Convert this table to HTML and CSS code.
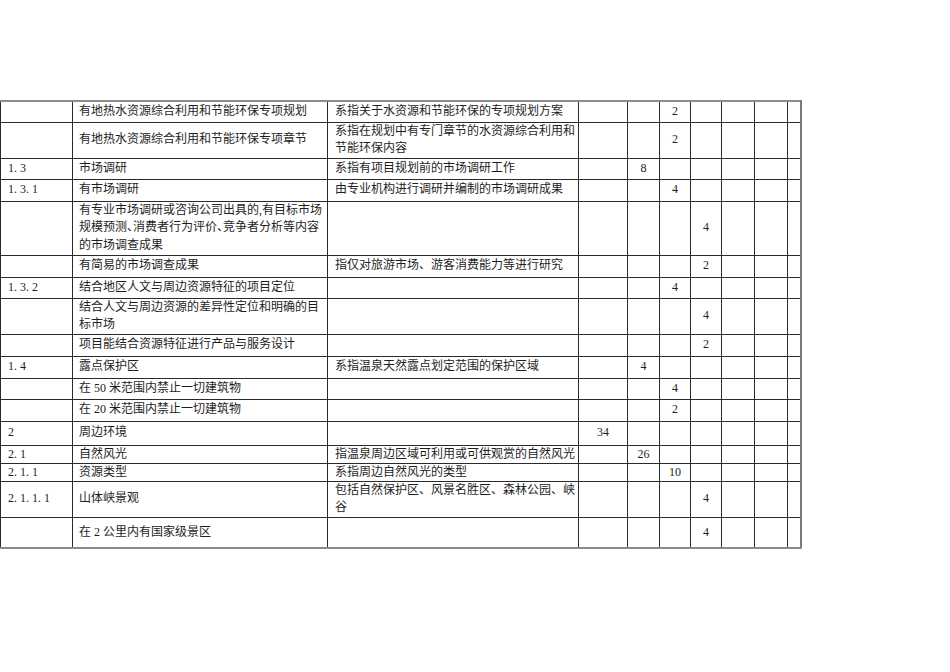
FILE: index.html
```html
<!DOCTYPE html>
<html lang="zh-CN">
<head>
<meta charset="utf-8">
<title>温泉评分表</title>
<link rel="stylesheet" href="styles.css">
</head>
<body>
<div class="page">
<table class="grid">
  <colgroup>
    <col class="c-code"><col class="c-item"><col class="c-desc">
    <col class="c-s1"><col class="c-s2"><col class="c-s3"><col class="c-s4">
    <col class="c-s5"><col class="c-s6"><col class="c-s7">
  </colgroup>
  <tbody>
    <tr class="h21"><td></td><td>有地热水资源综合利用和节能环保专项规划</td><td class="desc">系指关于水资源和节能环保的专项规划方案</td><td></td><td></td><td class="n">2</td><td></td><td></td><td></td><td></td></tr>
    <tr class="h36"><td></td><td>有地热水资源综合利用和节能环保专项章节</td><td class="desc">系指在规划中有专门章节的水资源综合利用和<br>节能环保内容</td><td></td><td></td><td class="n">2</td><td></td><td></td><td></td><td></td></tr>
    <tr class="h21"><td class="code">1. 3</td><td>市场调研</td><td class="desc">系指有项目规划前的市场调研工作</td><td></td><td class="n">8</td><td></td><td></td><td></td><td></td><td></td></tr>
    <tr class="h22"><td class="code">1. 3. 1</td><td>有市场调研</td><td class="desc">由专业机构进行调研并编制的市场调研成果</td><td></td><td></td><td class="n">4</td><td></td><td></td><td></td><td></td></tr>
    <tr class="h54"><td></td><td>有专业市场调研或咨询公司出具的,有目标市场<br>规模预测<span class="half">、</span>消费者行为评价<span class="half">、</span>竞争者分析等内容<br>的市场调查成果</td><td class="desc"></td><td></td><td></td><td></td><td class="n">4</td><td></td><td></td><td></td></tr>
    <tr class="h22"><td></td><td>有简易的市场调查成果</td><td class="desc">指仅对旅游市场、游客消费能力等进行研究</td><td></td><td></td><td></td><td class="n">2</td><td></td><td></td><td></td></tr>
    <tr class="h21"><td class="code">1. 3. 2</td><td>结合地区人文与周边资源特征的项目定位</td><td class="desc"></td><td></td><td></td><td class="n">4</td><td></td><td></td><td></td><td></td></tr>
    <tr class="h35"><td></td><td>结合人文与周边资源的差异性定位和明确的目<br>标市场</td><td class="desc"></td><td></td><td></td><td></td><td class="n">4</td><td></td><td></td><td></td></tr>
    <tr class="h22"><td></td><td>项目能结合资源特征进行产品与服务设计</td><td class="desc"></td><td></td><td></td><td></td><td class="n">2</td><td></td><td></td><td></td></tr>
    <tr class="h22"><td class="code">1. 4</td><td>露点保护区</td><td class="desc">系指温泉天然露点划定范围的保护区域</td><td></td><td class="n">4</td><td></td><td></td><td></td><td></td><td></td></tr>
    <tr class="h21"><td></td><td>在 50 米范围内禁止一切建筑物</td><td class="desc"></td><td></td><td></td><td class="n">4</td><td></td><td></td><td></td><td></td></tr>
    <tr class="h22"><td></td><td>在 20 米范围内禁止一切建筑物</td><td class="desc"></td><td></td><td></td><td class="n">2</td><td></td><td></td><td></td><td></td></tr>
    <tr class="h24"><td class="code">2</td><td>周边环境</td><td class="desc"></td><td class="n">34</td><td></td><td></td><td></td><td></td><td></td><td></td></tr>
    <tr class="h18"><td class="code">2. 1</td><td>自然风光</td><td class="desc">指温泉周边区域可利用或可供观赏的自然风光</td><td></td><td class="n">26</td><td></td><td></td><td></td><td></td><td></td></tr>
    <tr class="h18"><td class="code">2. 1. 1</td><td>资源类型</td><td class="desc">系指周边自然风光的类型</td><td></td><td></td><td class="n">10</td><td></td><td></td><td></td><td></td></tr>
    <tr class="h35"><td class="code">2. 1. 1. 1</td><td>山体峡景观</td><td class="desc">包括自然保护区、风景名胜区、森林公园、峡<br>谷</td><td></td><td></td><td></td><td class="n">4</td><td></td><td></td><td></td></tr>
    <tr class="h31"><td></td><td>在 2 公里内有国家级景区</td><td class="desc"></td><td></td><td></td><td></td><td class="n">4</td><td></td><td></td><td></td></tr>
  </tbody>
</table>
</div>
</body>
</html>
```
FILE: styles.css
```css
html, body {
  margin: 0;
  padding: 0;
  background: #fff;
}
.page {
  padding-top: 100px;
}
.grid {
  border-collapse: collapse;
  table-layout: fixed;
  width: 801px;
  font-family: "Liberation Serif", "Noto Sans CJK SC", serif;
  font-size: 12px;
  line-height: 17.5px;
  color: #1e1e1e;
  border-top: 2px solid #8a8a8a;
  border-right: 2px solid #7a7a7a;
  border-bottom: 2px solid #8a8a8a;
  border-left: 1px solid #222;
}
.c-code { width: 72px; }
.c-item { width: 255px; }
.c-desc { width: 251px; }
.c-s1 { width: 49px; }
.c-s2 { width: 32px; }
.c-s3 { width: 31px; }
.c-s4 { width: 31px; }
.c-s5 { width: 33px; }
.c-s6 { width: 33px; }
.c-s7 { width: 13px; }
.grid td {
  border: 1px solid #2a2a2a;
  padding: 0 4px 0 6px;
  vertical-align: middle;
  white-space: nowrap;
  overflow: hidden;
}
.grid td.desc {
  padding-left: 7px;
}
.grid td.n {
  text-align: center;
  padding: 0;
}
.grid td.code {
  padding-left: 7px;
  white-space: pre;
}
.half {
  font-feature-settings: "halt";
}
.h18 { height: 18px; }
.h18 td { line-height: 15px; }
.h21 { height: 21px; }
.h22 { height: 22px; }
.h24 { height: 24px; }
.h31 { height: 31px; }
.h35 { height: 35px; }
.h36 { height: 36px; }
.h54 { height: 54px; }
```
